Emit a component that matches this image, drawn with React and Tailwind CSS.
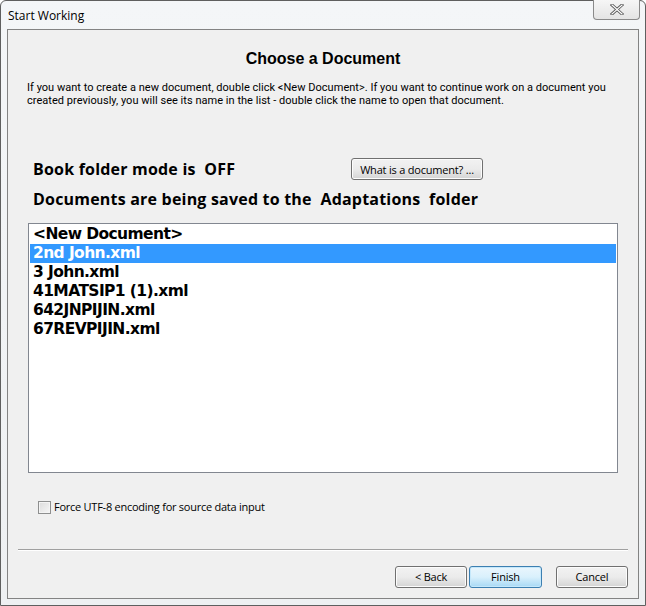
import React, { useState } from 'react';

const docs = [
    '<New Document>',
    '2nd John.xml',
    '3 John.xml',
    '41MATSIP1 (1).xml',
    '642JNPIJIN.xml',
    '67REVPIJIN.xml',
];

const uiFont = { fontFamily: '"Open Sans", "Noto Sans", Arial, sans-serif' };
const listFont = { fontFamily: '"DejaVu Sans", Verdana, sans-serif' };

const WinButton = ({ children, focused, className = '' }) => (
    <button
        className={`h-[22px] rounded-[3px] border text-[11px] text-black leading-none tracking-[-0.2px] ${
            focused
                ? 'border-[#3c7fb1] bg-gradient-to-b from-[#eaf6fd] via-[#d9f0fc] to-[#a7d9f5] shadow-[inset_0_0_0_1px_#c5e8fb]'
                : 'border-[#707070] bg-gradient-to-b from-[#f2f2f2] via-[#ebebeb] to-[#d4d4d4] shadow-[inset_0_0_0_1px_#fcfcfc]'
        } ${className}`}
        style={uiFont}
    >
        {children}
    </button>
);

const App = () => {
    const [selected, setSelected] = useState(1);
    const [forceUtf8, setForceUtf8] = useState(false);

    return (
        <div className="w-[646px] h-[606px] bg-white">
            {/* Window frame */}
            <div className="relative w-[646px] h-[606px] rounded-t-[6px] border border-[#5f5f5f] bg-gradient-to-b from-[#f4f6f8] to-[#eef0f2] flex flex-col">
                {/* Title bar */}
                <div className="h-[28px] flex items-start pt-[6px] pl-[7px]">
                    <span className="text-[12px] text-black" style={uiFont}>Start Working</span>
                </div>

                {/* Close button */}
                <div className="absolute top-[-1px] right-[5px] w-[47px] h-[20px] rounded-b-[4px] border border-[#8a8a8a] border-t-0 bg-gradient-to-b from-[#f6f6f6] to-[#e4e4e4] flex items-center justify-center">
                    <svg width="14" height="11" viewBox="0 0 14 11">
                        <path d="M2 1 L12 10 M12 1 L2 10" stroke="#5a5a5a" strokeWidth="3" strokeLinecap="square" />
                        <path d="M2 1 L12 10 M12 1 L2 10" stroke="#ffffff" strokeWidth="1.2" strokeLinecap="square" />
                    </svg>
                </div>

                {/* Client area */}
                <div className="mx-[6px] h-[570px] border border-[#838383] bg-[#f0f0f0] flex flex-col" style={uiFont}>
                    <h1 className="mt-[19px] text-center text-[16px] font-bold text-black leading-[20px]" style={{ fontFamily: '"Liberation Sans", Arial, sans-serif' }}>
                        Choose a Document
                    </h1>

                    <p className="mt-[12px] ml-[19px] text-[11px] leading-[13px] tracking-[0.03px] text-black whitespace-nowrap" style={{ fontFamily: 'Roboto, "Open Sans", sans-serif' }}>
                        If you want to create a new document, double click &lt;New Document&gt;. If you want to continue work on a document you
                        <br />
                        created previously, you will see its name in the list - double click the name to open that document.
                    </p>

                    <div className="mt-[51px] flex items-center">
                        <span className="ml-[25px] w-[318px] text-[16px] font-bold leading-[20px] tracking-[0.2px] text-black whitespace-pre">
                            Book folder mode is  OFF
                        </span>
                        <WinButton className="w-[132px] h-[21px]">What is a document? ...</WinButton>
                    </div>

                    <div className="mt-[9px] ml-[25px] text-[16px] font-bold leading-[20px] tracking-[0.2px] text-black whitespace-pre">
                        Documents are being saved to the  Adaptations  folder
                    </div>

                    {/* Document list */}
                    <div className="mt-[14px] ml-[20px] w-[590px] h-[250px] border border-[#828790] bg-white p-[1px]" style={listFont}>
                        {docs.map((d, i) => (
                            <div
                                key={d}
                                onClick={() => setSelected(i)}
                                className={`h-[19px] pl-[3px] text-[15.5px] font-bold leading-[19px] tracking-[-0.6px] ${
                                    i === selected ? 'bg-[#3399ff] text-white' : 'text-black'
                                }`}
                            >
                                {d}
                            </div>
                        ))}
                    </div>

                    {/* Checkbox */}
                    <label className="mt-[26px] ml-[30px] flex items-center gap-[3px] text-[11px] tracking-[-0.25px] text-black">
                        <span
                            onClick={() => setForceUtf8(!forceUtf8)}
                            className="w-[13px] h-[13px] border border-[#8e8f8f] bg-gradient-to-br from-[#dcdcdc] to-[#f6f6f6] shadow-[inset_0_0_0_1px_#f4f4f4] flex items-center justify-center text-[10px]"
                        >
                            {forceUtf8 ? '✓' : ''}
                        </span>
                        Force UTF-8 encoding for source data input
                    </label>

                    {/* Separator */}
                    <div className="mt-[33px] mx-[10px] h-[2px] border-t border-[#a0a0a0] border-b border-b-white" />

                    {/* Buttons */}
                    <div className="mt-[15px] flex justify-end pr-[10px]">
                        <WinButton className="w-[72px]">&lt; Back</WinButton>
                        <WinButton focused className="w-[73px] ml-[2px]">Finish</WinButton>
                        <WinButton className="w-[72px] ml-[14px]">Cancel</WinButton>
                    </div>
                </div>
            </div>
        </div>
    );
};

export default App;
